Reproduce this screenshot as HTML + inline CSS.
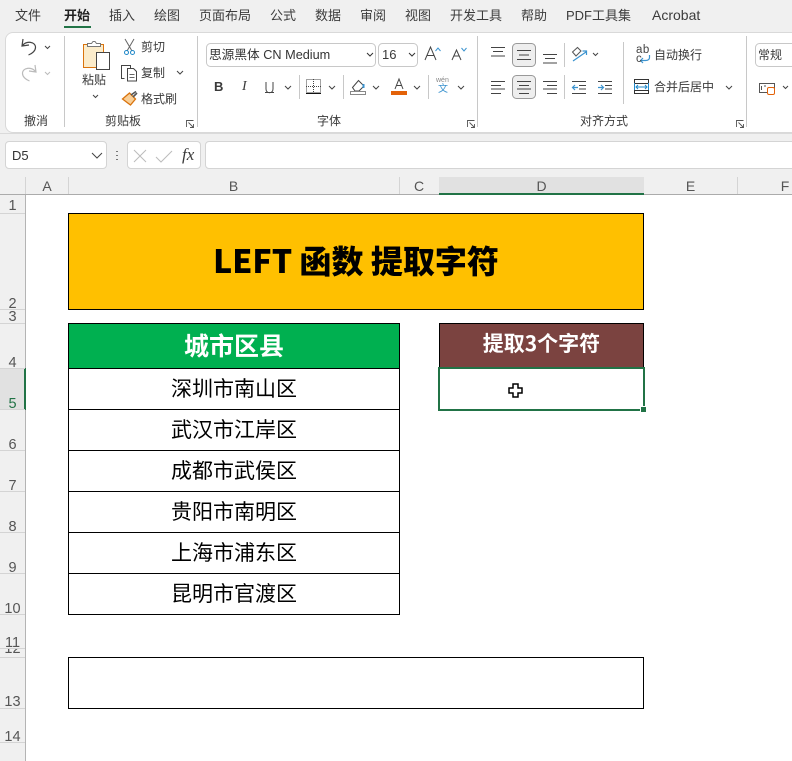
<!DOCTYPE html>
<html lang="zh"><head><meta charset="utf-8">
<style>
*{box-sizing:border-box}
html,body{margin:0;padding:0}
body{width:792px;height:761px;overflow:hidden;position:relative;background:#fff;font-family:"Liberation Sans","Noto Sans CJK SC",sans-serif;color:#333}
.a{position:absolute;white-space:nowrap}
.t{position:absolute;white-space:nowrap;font-size:12px;line-height:16px;color:#3a3a3a}
.m{position:absolute;top:7px;font-size:13px;line-height:17px;color:#3c3c3c;white-space:nowrap}
.sep{position:absolute;width:1px;background:#c8c8c8}
.box{position:absolute;border:1px solid #000;background:#fff}
.cell{position:absolute;left:68px;width:332px;border:1px solid #000;background:#fff;text-align:center;font-size:21px;color:#000;height:42px;line-height:38px;font-family:"Noto Sans CJK SC",sans-serif}
.rh{position:absolute;left:0;width:25px;text-align:center;font-size:14.5px;color:#555;line-height:14px}
.rl{position:absolute;left:0;width:25px;height:1px;background:#d4d4d4}
.ch{position:absolute;top:179px;font-size:14px;line-height:15px;color:#555;text-align:center}
.cl{position:absolute;top:177px;width:1px;height:17px;background:#d4d4d4}
svg{position:absolute;overflow:visible}
</style></head><body>
<div class="a" style="left:0;top:0;width:792px;height:177px;background:#f0f0f0"></div>
<div class="m" style="left:15px">文件</div>
<div class="m" style="left:64px;font-weight:700;color:#222">开始</div>
<div class="a" style="left:64px;top:26px;width:27px;height:2px;background:#217346"></div>
<div class="m" style="left:109px">插入</div>
<div class="m" style="left:154px">绘图</div>
<div class="m" style="left:199px">页面布局</div>
<div class="m" style="left:270px">公式</div>
<div class="m" style="left:315px">数据</div>
<div class="m" style="left:360px">审阅</div>
<div class="m" style="left:405px">视图</div>
<div class="m" style="left:450px">开发工具</div>
<div class="m" style="left:521px">帮助</div>
<div class="m" style="left:566px">PDF工具集</div>
<div class="m" style="left:652px;font-size:14px">Acrobat</div>
<div class="a" style="left:5px;top:32px;width:800px;height:101px;background:#fff;border:1px solid #d9d9d9;border-radius:8px"></div>
<div class="sep" style="left:64px;top:36px;height:91px"></div>
<div class="sep" style="left:197px;top:36px;height:91px"></div>
<div class="sep" style="left:477px;top:36px;height:91px"></div>
<div class="sep" style="left:746px;top:36px;height:91px"></div>
<svg style="left:0;top:0" width="792" height="140" fill="none" stroke-width="1">
<path d="M23 39l-1 7 7-1M22.500 45.500c4-5 13-4 13 2 0 3-3 6-7 7.500" stroke="#444" stroke-width="1.200"/>
<path d="M45 46l2.500 2.500 2.500-2.500" stroke="#444"/>
<path d="M35 65l1 7-7-1M35.500 71.500c-4-5-13-4-13 2 0 3 3 6 7 7.500" stroke="#bbb" stroke-width="1.200"/>
<path d="M45 72l2.500 2.500 2.500-2.500" stroke="#bbb"/>
<rect x="83.500" y="44.500" width="20" height="23" fill="#fbeccb" stroke="#d9730d"/>
<path d="M87.500 46.500v-3h4l1.500-2h2l1.500 2h4v3z" fill="#fff" stroke="#777"/>
<rect x="96.500" y="52.500" width="13" height="17" fill="#fff" stroke="#444"/>
<path d="M93 95l2.500 2.500 2.500-2.500" stroke="#444"/>
<path d="M125 39l7 12M134 39l-7 12" stroke="#666"/><circle cx="126.500" cy="52.500" r="2" stroke="#1f88c9"/><circle cx="132.500" cy="52.500" r="2" stroke="#1f88c9"/>
<path d="M124.500 78.500h-3v-13h9v3" stroke="#444"/><path d="M127.500 68.500h6l3 3v9.500h-9z" stroke="#444" fill="#fff"/><path d="M129.500 74.500h5M129.500 77.500h5" stroke="#666"/>
<path d="M177 71l3 3 3-3" stroke="#444"/>
<path d="M122.500 99l7-6 6 6-5 6z" fill="#f9cf97" stroke="#d9730d" stroke-width="1.300"/><path d="M131 95l5-3.500M133 97l4-4" stroke="#555" stroke-width="1.600"/>
<path d="M186.500 127v-6.500h7M188.500 122.500l5 5M193.500 124v3.500h-3.500" stroke="#555" stroke-width=".9"/>
<rect x="206.500" y="43.500" width="169" height="23" rx="4" stroke="#c8c8c8" fill="#fff"/>
<path d="M367 53l3 3 3-3" stroke="#333"/>
<rect x="378.500" y="43.500" width="39" height="23" rx="4" stroke="#c8c8c8" fill="#fff"/>
<path d="M409 53l3 3 3-3" stroke="#333"/>
<path d="M425 60l5.500-13 5.500 13M427 55.500h7" stroke="#444"/><path d="M435.500 51l2.500-3 2.500 3" stroke="#3b93cf"/>
<path d="M452 60l4.500-10 4.500 10M454 56h5" stroke="#444"/><path d="M461.500 48l2.500 3 2.500-3" stroke="#3b93cf"/>
<path d="M266 82v7c0 5 7 5 7 0v-7M265 92.500h9" stroke="#444"/>
<path d="M285 86l3 3 3-3M329 86l3 3 3-3M373 86l3 3 3-3M414 86l3 3 3-3M458 86l3 3 3-3" stroke="#444"/>
<path d="M299.500 75v24M343.500 75v24M428.500 75v24" stroke="#c8c8c8"/>
<rect x="306.500" y="79.500" width="14" height="13" stroke="#444" stroke-dasharray="1 1"/><path d="M306 86.500h15M313.500 79v14" stroke="#444" stroke-dasharray="1 1"/><path d="M306 93.500h15" stroke="#111"/>
<path d="M352.500 87.500l6-7 5.500 5.500-5 5h-4z" stroke="#444"/><path d="M363.500 84v4" stroke="#3b93cf" stroke-width="2"/><rect x="350.500" y="91.500" width="15" height="3" stroke="#888" fill="#fff"/>
<path d="M395 89l4-10 4 10M396.500 85.500h5" stroke="#444"/><rect x="391" y="91" width="16" height="4" fill="#e36209"/>
<path d="M467.500 127v-6.500h7M469.500 122.500l5 5M474.500 124v3.500h-3.500" stroke="#555" stroke-width=".9"/>
<path d="M491 47.500h14M493 51.500h10M491 56h14" stroke="#444"/>
<rect x="512.500" y="43.500" width="23" height="23" rx="4" fill="#eee" stroke="#999"/>
<path d="M517 50.500h14M519 55h10M517 59.500h14" stroke="#444"/>
<path d="M543 54.500h14M545 58.500h10M543 63h14" stroke="#444"/>
<path d="M573 61l13-9M582.500 51h4v4" stroke="#3b93cf" stroke-width="1.200"/><path d="M572.500 52l5-4.500 3.500 3.500-5 5z" stroke="#555"/>
<path d="M593 53l2.500 2.500 2.500-2.500" stroke="#444"/>
<path d="M491 81.500h14M491 85.500h10M491 89h14M491 93.500h10" stroke="#444"/>
<path d="M623.500 42v62" stroke="#c8c8c8"/>
<path d="M564.500 43v24M564.500 75v24" stroke="#c8c8c8"/>
<rect x="512.500" y="75.500" width="23" height="23" rx="4" fill="#eee" stroke="#999"/>
<path d="M517 81.500h14M519 85.500h10M517 89h14M519 93.500h10" stroke="#444"/>
<path d="M543 81.500h14M547 85.500h10M543 89h14M547 93.500h10" stroke="#444"/>
<path d="M572 81.500h14M579 85.500h7M579 89h7M572 93.500h14" stroke="#444"/><path d="M578 87.500h-5.500M575 85l-2.500 2.500 2.500 2.500" stroke="#3b93cf" stroke-width="1.200"/>
<path d="M598 81.500h14M605 85.500h7M605 89h7M598 93.500h14" stroke="#444"/><path d="M598 87.500h5.500M601 85l2.500 2.500-2.500 2.500" stroke="#3b93cf" stroke-width="1.200"/>
<path d="M649.500 55v2.500c0 2.500-2 3-4 3h-4M643 58l-2.500 2.500 2.500 2.500" stroke="#3b93cf" stroke-width="1.200"/>
<rect x="634.500" y="79.500" width="14" height="14" stroke="#333"/><path d="M635 83.500h13M635 90.500h13" stroke="#333"/><path d="M636 87h11M638 85l-2 2 2 2M645 85l2 2-2 2" stroke="#1f88c9"/><path d="M634.500 83v7M648.500 83v7" stroke="#1f88c9"/>
<path d="M726 86l3 3 3-3" stroke="#444"/>
<path d="M736.500 127v-6.500h7M738.500 122.500l5 5M743.500 124v3.500h-3.500" stroke="#555" stroke-width=".9"/>
<rect x="755.500" y="43.500" width="60" height="23" rx="4" stroke="#c8c8c8" fill="#fff"/>
<rect x="759.500" y="83.500" width="15" height="9" stroke="#555"/><path d="M761.500 86v4M764 86h2" stroke="#555"/><rect x="767.500" y="87.500" width="7" height="7" rx="1.500" stroke="#e36209" fill="#fff"/>
<path d="M783 86l2.500 2.500 2.500-2.500" stroke="#444"/>
</svg>
<div class="t" style="left:82px;top:72px">粘贴</div>
<div class="t" style="left:141px;top:39px">剪切</div>
<div class="t" style="left:141px;top:65px">复制</div>
<div class="t" style="left:141px;top:91px">格式刷</div>
<div class="t" style="left:24px;top:113px">撤消</div>
<div class="t" style="left:105px;top:113px">剪贴板</div>
<div class="t" style="left:209px;top:47px;color:#333;font-size:12.7px">思源黑体 CN Medium</div>
<div class="t" style="left:382px;top:47px;font-size:13px">16</div>
<div class="t" style="left:214px;top:79px;font-weight:700;font-size:13px">B</div>
<div class="t" style="left:242px;top:79px;font-style:italic;font-family:'Liberation Serif',serif;font-size:14px">I</div>
<div class="t" style="left:436px;top:76px;font-size:7px;line-height:9px;color:#888">wén</div>
<div class="t" style="left:438px;top:84px;font-size:10px;line-height:12px;color:#3b93cf">文</div>
<div class="t" style="left:317px;top:113px">字体</div>
<div class="t" style="left:580px;top:113px">对齐方式</div>
<div class="t" style="left:636px;top:44px;font-size:11.5px;line-height:13px;letter-spacing:.5px;color:#444">ab</div>
<div class="t" style="left:636px;top:53px;font-size:11.5px;line-height:13px;color:#444">c</div>
<div class="t" style="left:654px;top:47px">自动换行</div>
<div class="t" style="left:654px;top:79px">合并后居中</div>
<div class="t" style="left:758px;top:47px">常规</div>
<div class="a" style="left:0;top:133px;width:792px;height:44px;background:#f0f0f0;border-top:1px solid #dadada"></div>
<div class="a" style="left:5px;top:141px;width:102px;height:28px;background:#fff;border:1px solid #d4d4d4;border-radius:4px"></div>
<div class="t" style="left:12px;top:148px;font-size:13px;color:#333">D5</div>
<div class="a" style="left:127px;top:141px;width:74px;height:28px;background:#fff;border:1px solid #d4d4d4;border-radius:4px"></div>
<div class="a" style="left:205px;top:141px;width:600px;height:28px;background:#fff;border:1px solid #d4d4d4;border-radius:4px"></div>
<div class="t" style="left:182px;top:147px;font-family:'Liberation Serif',serif;font-style:italic;font-size:17px">fx</div>
<svg style="left:0;top:0" width="792" height="195" fill="none">
<path d="M92 153l5 5 5-5" stroke="#444"/>
<path d="M117 151v1M117 155v1M117 159v1" stroke="#777" stroke-width="2"/>
<path d="M134 150l12 12M146 150l-12 12M156 157l5 5 11-11" stroke="#bcbcbc"/>
<path d="M22 181v11H11z" fill="#d9d9d9"/>
</svg>
<div class="a" style="left:0;top:177px;width:792px;height:18px;background:#f0f0f0;border-bottom:1px solid #ababab"></div>
<div class="a" style="left:439px;top:177px;width:205px;height:18px;background:#e1e1e1;border-bottom:2px solid #217346"></div>
<div class="cl" style="left:25px;background:#d4d4d4"></div><div class="cl" style="left:68px"></div><div class="cl" style="left:399px"></div><div class="cl" style="left:737px"></div>
<div class="ch" style="left:26px;width:42px">A</div><div class="ch" style="left:68px;width:331px">B</div><div class="ch" style="left:399px;width:40px">C</div><div class="ch" style="left:439px;width:205px">D</div><div class="ch" style="left:644px;width:93px">E</div><div class="ch" style="left:737px;width:96px">F</div>
<div class="a" style="left:0;top:195px;width:26px;height:566px;background:#f0f0f0;border-right:1px solid #b4b4b4"></div>
<div class="a" style="left:0;top:368px;width:26px;height:42px;background:#e1e1e1;border-right:2px solid #217346"></div>
<div class="rl" style="top:213px"></div><div class="rl" style="top:309px"></div><div class="rl" style="top:323px"></div><div class="rl" style="top:368px"></div><div class="rl" style="top:409px"></div><div class="rl" style="top:450px"></div><div class="rl" style="top:491px"></div><div class="rl" style="top:532px"></div><div class="rl" style="top:573px"></div><div class="rl" style="top:614px"></div><div class="rl" style="top:648px"></div><div class="rl" style="top:657px"></div><div class="rl" style="top:708px"></div><div class="rl" style="top:742px"></div>
<div class="rh" style="top:199px">1</div><div class="rh" style="top:297px">2</div><div class="rh" style="top:310px">3</div><div class="rh" style="top:356px">4</div><div class="rh" style="top:397px;color:#217346">5</div><div class="rh" style="top:438px">6</div><div class="rh" style="top:479px">7</div><div class="rh" style="top:520px">8</div><div class="rh" style="top:561px">9</div><div class="rh" style="top:602px">10</div><div class="rh" style="top:636px">11</div>
<div class="a" style="left:0;top:649px;width:25px;height:6px;overflow:hidden"><div class="rh" style="top:-7px">12</div></div>
<div class="rh" style="top:695px">13</div><div class="rh" style="top:730px">14</div>
<div class="box" style="left:68px;top:213px;width:576px;height:97px;background:#ffc000;text-align:center;font-family:'Noto Sans CJK SC',sans-serif;font-size:32px;font-weight:900;color:#000;line-height:92px;white-space:nowrap">LEFT 函数 提取字符</div>
<div class="cell" style="top:323px;height:46px;background:#00b050;color:#fff;font-weight:700;font-size:25px;line-height:42px">城市区县</div>
<div class="cell" style="top:368px">深圳市南山区</div>
<div class="cell" style="top:409px">武汉市江岸区</div>
<div class="cell" style="top:450px">成都市武侯区</div>
<div class="cell" style="top:491px">贵阳市南明区</div>
<div class="cell" style="top:532px">上海市浦东区</div>
<div class="cell" style="top:573px">昆明市官渡区</div>
<div class="box" style="left:439px;top:323px;width:205px;height:46px;background:#7b4340;color:#fff;font-family:'Noto Sans CJK SC',sans-serif;font-weight:700;font-size:21px;text-align:center;line-height:39px;white-space:nowrap">提取3个字符</div>
<div class="box" style="left:68px;top:657px;width:576px;height:52px"></div>
<div class="a" style="left:438px;top:367px;width:207px;height:44px;border:2px solid #217346"></div>
<div class="a" style="left:641px;top:407px;width:5px;height:5px;background:#217346;outline:1px solid #fff"></div>
<svg style="left:508px;top:383px" width="15" height="15"><path d="M5 1h5v4h4v5h-4v4H5v-4H1V5h4z" fill="#fff" stroke="#000" stroke-width="1.500"/></svg>
</body></html>
